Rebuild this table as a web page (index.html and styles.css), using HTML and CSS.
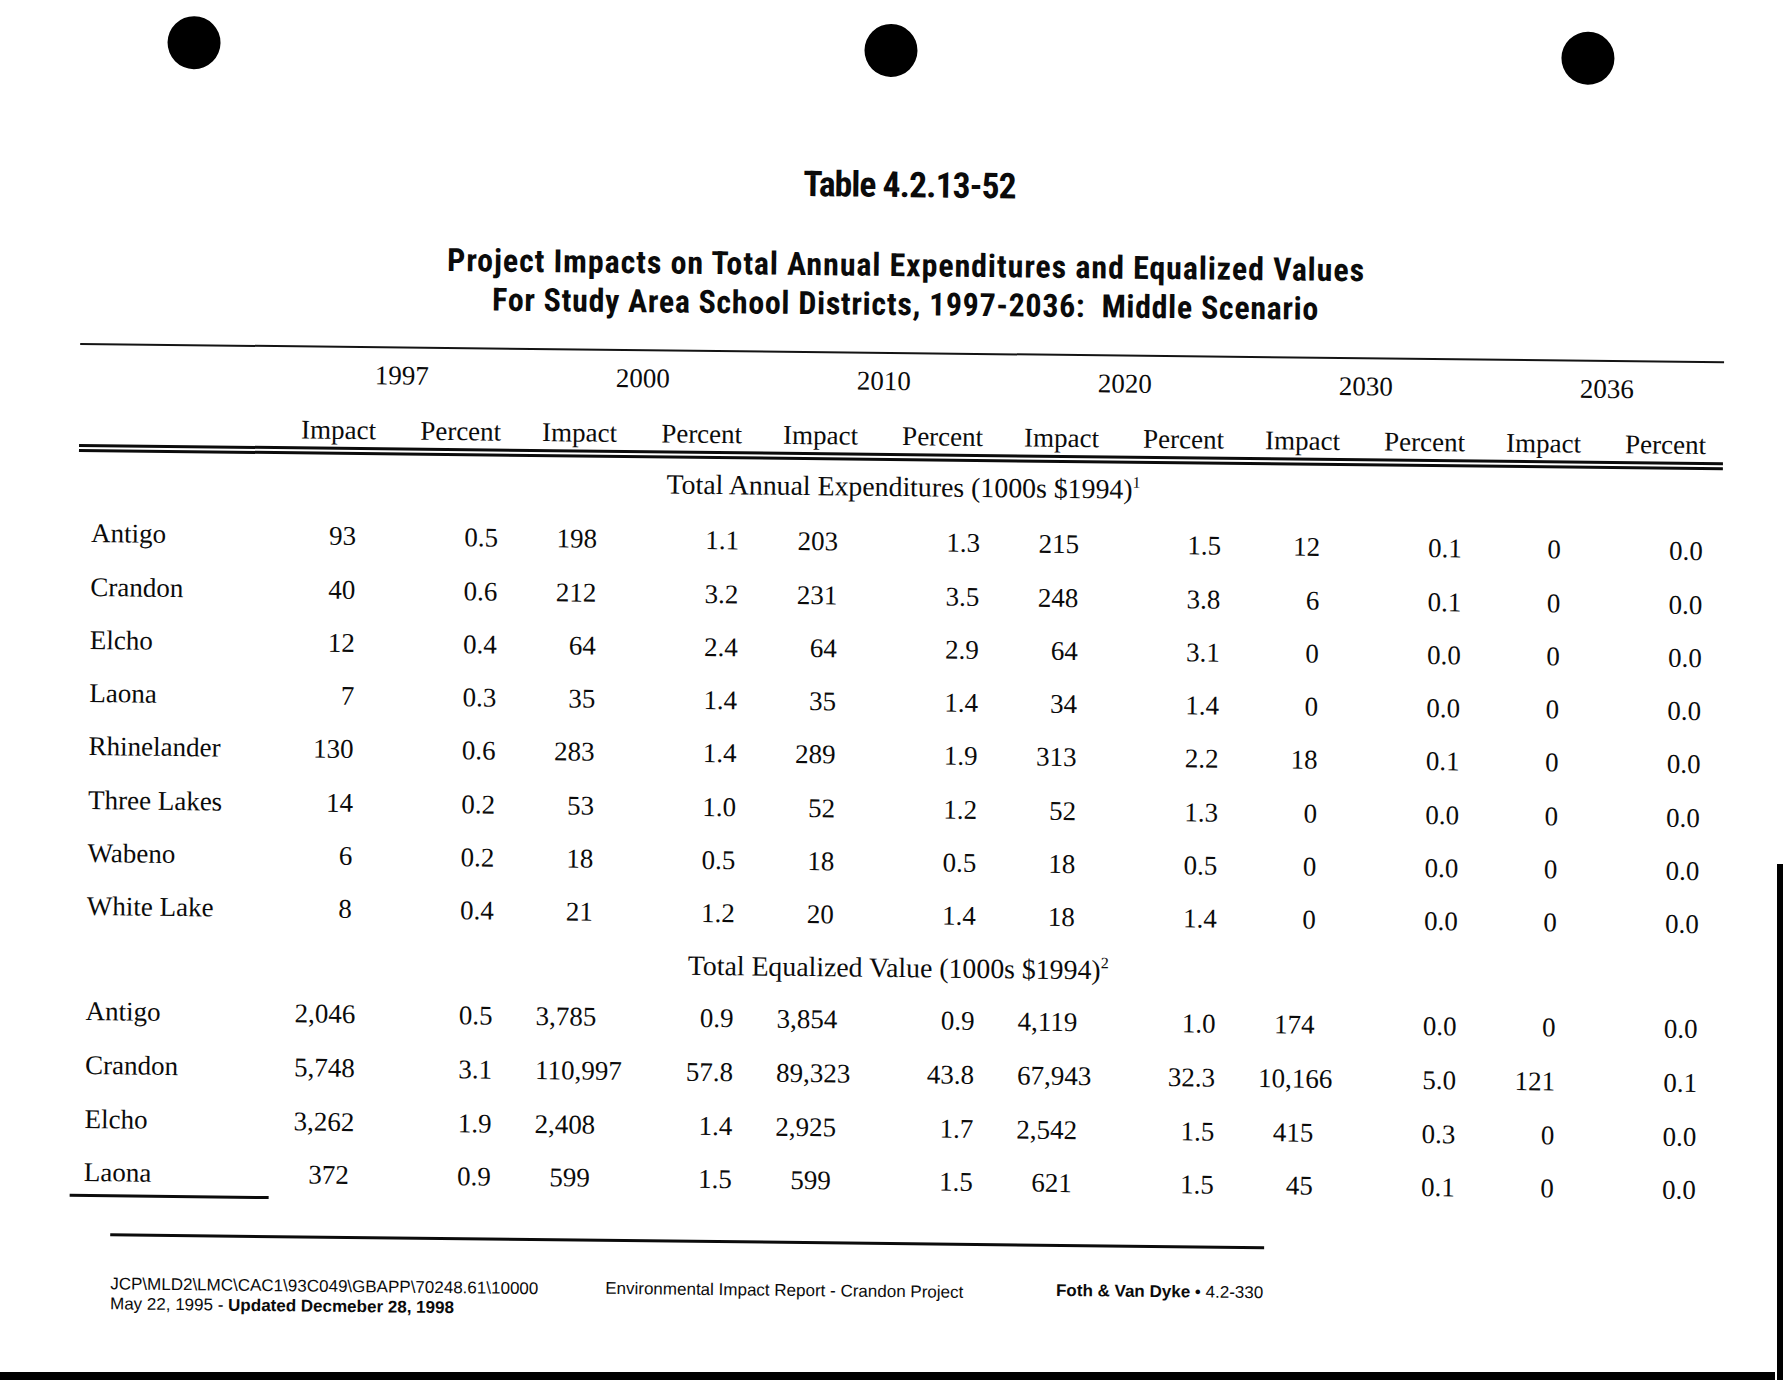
FILE: index.html
```html
<!DOCTYPE html>
<html lang="en">
<head>
<meta charset="utf-8">
<title>Table 4.2.13-52</title>
<link rel="stylesheet" href="styles.css">
</head>
<body>
<div class="sheet">
  <div class="holes"><span class="hole"></span><span class="hole"></span><span class="hole"></span></div>

  <h1 class="table-no">Table 4.2.13-52</h1>
  <h2 class="title">
    <span class="tl tl1"><span class="w">Project</span> <span class="w">Impacts</span> <span class="w">on</span> <span class="w">Total</span> <span class="w">Annual</span> <span class="w">Expenditures</span> <span class="w">and</span> <span class="w">Equalized</span> <span class="w">Values</span></span>
    <span class="tl tl2"><span class="w">For</span> <span class="w">Study</span> <span class="w">Area</span> <span class="w">School</span> <span class="w">Districts,</span> <span class="w">1997-2036:</span>&nbsp; <span class="w">Middle</span> <span class="w">Scenario</span></span>
  </h2>

  <div class="rule-top"></div>

  <div class="cols thead">
    <div class="n"></div>
    <div class="yr">1997</div><div class="yr">2000</div><div class="yr">2010</div>
    <div class="yr">2020</div><div class="yr">2030</div><div class="yr">2036</div>
    <div class="n"></div>
    <div class="hi">Impact</div><div class="hp">Percent</div>
    <div class="hi">Impact</div><div class="hp">Percent</div>
    <div class="hi">Impact</div><div class="hp">Percent</div>
    <div class="hi">Impact</div><div class="hp">Percent</div>
    <div class="hi">Impact</div><div class="hp">Percent</div>
    <div class="hi">Impact</div><div class="hp">Percent</div>
  </div>

  <div class="rule-double"></div>

  <div class="sub sub1">Total Annual Expenditures (1000s $1994)<sup>1</sup></div>

  <div class="cols tbody s1">
    <div class="n">Antigo</div><div class="i">93</div><div class="p">0.5</div><div class="i">198</div><div class="p">1.1</div><div class="i">203</div><div class="p">1.3</div><div class="i">215</div><div class="p">1.5</div><div class="i">12</div><div class="p">0.1</div><div class="i">0</div><div class="p">0.0</div>
    <div class="n">Crandon</div><div class="i">40</div><div class="p">0.6</div><div class="i">212</div><div class="p">3.2</div><div class="i">231</div><div class="p">3.5</div><div class="i">248</div><div class="p">3.8</div><div class="i">6</div><div class="p">0.1</div><div class="i">0</div><div class="p">0.0</div>
    <div class="n">Elcho</div><div class="i">12</div><div class="p">0.4</div><div class="i">64</div><div class="p">2.4</div><div class="i">64</div><div class="p">2.9</div><div class="i">64</div><div class="p">3.1</div><div class="i">0</div><div class="p">0.0</div><div class="i">0</div><div class="p">0.0</div>
    <div class="n">Laona</div><div class="i">7</div><div class="p">0.3</div><div class="i">35</div><div class="p">1.4</div><div class="i">35</div><div class="p">1.4</div><div class="i">34</div><div class="p">1.4</div><div class="i">0</div><div class="p">0.0</div><div class="i">0</div><div class="p">0.0</div>
    <div class="n">Rhinelander</div><div class="i">130</div><div class="p">0.6</div><div class="i">283</div><div class="p">1.4</div><div class="i">289</div><div class="p">1.9</div><div class="i">313</div><div class="p">2.2</div><div class="i">18</div><div class="p">0.1</div><div class="i">0</div><div class="p">0.0</div>
    <div class="n">Three Lakes</div><div class="i">14</div><div class="p">0.2</div><div class="i">53</div><div class="p">1.0</div><div class="i">52</div><div class="p">1.2</div><div class="i">52</div><div class="p">1.3</div><div class="i">0</div><div class="p">0.0</div><div class="i">0</div><div class="p">0.0</div>
    <div class="n">Wabeno</div><div class="i">6</div><div class="p">0.2</div><div class="i">18</div><div class="p">0.5</div><div class="i">18</div><div class="p">0.5</div><div class="i">18</div><div class="p">0.5</div><div class="i">0</div><div class="p">0.0</div><div class="i">0</div><div class="p">0.0</div>
    <div class="n">White Lake</div><div class="i">8</div><div class="p">0.4</div><div class="i">21</div><div class="p">1.2</div><div class="i">20</div><div class="p">1.4</div><div class="i">18</div><div class="p">1.4</div><div class="i">0</div><div class="p">0.0</div><div class="i">0</div><div class="p">0.0</div>
  </div>

  <div class="sub sub2">Total Equalized Value (1000s $1994)<sup>2</sup></div>

  <div class="cols tbody s2">
    <div class="n">Antigo</div><div class="i">2,046</div><div class="p">0.5</div><div class="i">3,785</div><div class="p">0.9</div><div class="i">3,854</div><div class="p">0.9</div><div class="i">4,119</div><div class="p">1.0</div><div class="i">174</div><div class="p">0.0</div><div class="i">0</div><div class="p">0.0</div>
    <div class="n">Crandon</div><div class="i">5,748</div><div class="p">3.1</div><div class="i wide-l">110,997</div><div class="p">57.8</div><div class="i wide-s">89,323</div><div class="p">43.8</div><div class="i wide-s">67,943</div><div class="p">32.3</div><div class="i wide-s">10,166</div><div class="p">5.0</div><div class="i">121</div><div class="p">0.1</div>
    <div class="n">Elcho</div><div class="i">3,262</div><div class="p">1.9</div><div class="i">2,408</div><div class="p">1.4</div><div class="i">2,925</div><div class="p">1.7</div><div class="i">2,542</div><div class="p">1.5</div><div class="i">415</div><div class="p">0.3</div><div class="i">0</div><div class="p">0.0</div>
    <div class="n">Laona</div><div class="i">372</div><div class="p">0.9</div><div class="i">599</div><div class="p">1.5</div><div class="i">599</div><div class="p">1.5</div><div class="i">621</div><div class="p">1.5</div><div class="i">45</div><div class="p">0.1</div><div class="i">0</div><div class="p">0.0</div>
  </div>

  <div class="rule-stub"></div>
  <div class="rule-foot"></div>

  <footer class="footer">
    <div class="f-left">
      <div>JCP\MLD2\LMC\CAC1\93C049\GBAPP\70248.61\10000</div>
      <div>May 22, 1995 - <b>Updated Decmeber 28, 1998</b></div>
    </div>
    <div class="f-mid">Environmental Impact Report - Crandon Project</div>
    <div class="f-right"><b>Foth &amp; Van Dyke</b> &bull; 4.2-330</div>
  </footer>
</div>
<div class="edge-right"></div>
<div class="edge-bottom"></div>
</body>
</html>
```

FILE: styles.css
```css
* { box-sizing: border-box; margin: 0; padding: 0; }

html, body {
  width: 1783px;
  height: 1380px;
  overflow: hidden;
  background: #fff;
}

body {
  position: relative;
  font-family: "Liberation Serif", "Times New Roman", serif;
  color: #0b0b0b;
}

.sheet {
  width: 1783px;
  height: 1380px;
  transform: rotate(0.64deg);
  transform-origin: 0 0;
}

/* punch holes */
.holes {
  display: flex;
  gap: 644px;
  height: 67px;
  padding: 14px 0 0 168px;
}
.hole {
  width: 53px;
  height: 53px;
  border-radius: 50%;
  background: #000;
}

/* headings */
.table-no {
  margin-top: 88px;
  height: 40px;
  padding-left: 40px;
  text-align: center;
  font: 700 35.5px/40px "Roboto Condensed", "Open Sans", sans-serif;
  font-stretch: 83%;
  letter-spacing: -0.9px;
}
.title {
  margin-top: 40.7px;
  padding-left: 35px;
  text-align: center;
  font: 700 32px/39px "Roboto Condensed", "Open Sans", sans-serif;
  font-stretch: 83%;
}
.tl { display: block; height: 39px; }
.tl1 { letter-spacing: 0.9px; }
.tl2 { letter-spacing: 0.67px; }

/* rules */
.rule-top {
  margin: 28.3px 0 0 84px;
  width: 1644px;
  height: 2px;
  background: #141414;
}
.rule-double {
  margin: 2px 0 0 84px;
  width: 1644px;
  height: 8px;
  border-top: 3px solid #0b0b0b;
  border-bottom: 3px solid #0b0b0b;
}
.rule-stub {
  margin: -5.3px 0 0 83px;
  width: 199px;
  height: 3px;
  background: #0b0b0b;
}
.rule-foot {
  margin: 35.5px 0 0 124px;
  width: 1154px;
  height: 3px;
  background: #0b0b0b;
}

/* table grid */
.cols {
  display: grid;
  grid-template-columns: 222px repeat(6, 76px 165px);
  margin-left: 84px;
  font-size: 27px;
}
.thead {
  margin-top: 12px;
  row-gap: 25px;
  line-height: 30px;
}
.yr {
  grid-column: span 2;
  padding-right: 41px;
  text-align: center;
}
.hi { text-align: left; white-space: nowrap; }
.hp { text-align: right; padding-right: 41px; }

.sub {
  margin-left: 84px;
  width: 1668px;
  padding-right: 18px;
  text-align: center;
  font-size: 27.8px;
}
.sub sup {
  font-size: 16px;
  line-height: 0;
  vertical-align: 11px;
}
.sub1 { height: 55.4px; line-height: 51px; }
.sub2 { height: 52px; line-height: 51.2px; }

.s1 { grid-auto-rows: 53.25px; line-height: 53.25px; }
.s2 { grid-auto-rows: 53.6px; line-height: 53.6px; }

.n { padding-left: 13px; white-space: nowrap; }
.i { text-align: right; padding-right: 20px; white-space: nowrap; }
.p { text-align: right; padding-right: 43px; }
.wide-l { margin-right: -24px; }
.wide-s { margin-right: -8px; }

/* footer */
.footer {
  display: flex;
  align-items: flex-start;
  margin: 37.7px 0 0 124.6px;
  width: 1153px;
  font: 400 17px/20.4px "Liberation Sans", Arial, sans-serif;
}
.f-left { width: 495px; }
.f-mid { margin-top: -1px; }
.f-right { margin-left: auto; margin-top: -3.5px; }
.footer b { font-weight: 700; }

/* scanner edges */
.edge-right {
  position: absolute;
  top: 864px;
  right: 0;
  width: 6px;
  height: 516px;
  background: #000;
}
.edge-bottom {
  position: absolute;
  left: 0;
  bottom: 0;
  width: 1775px;
  height: 8px;
  background: #000;
}
```
